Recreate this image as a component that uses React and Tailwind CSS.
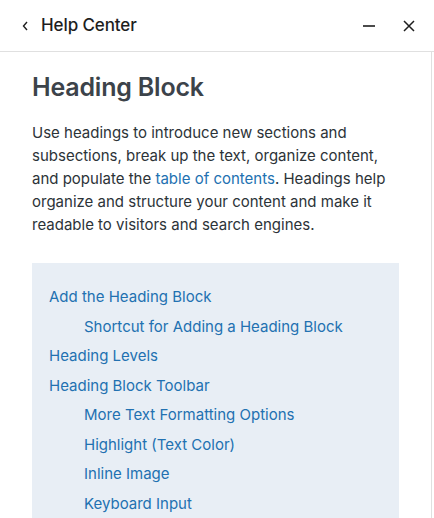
import React from 'react';

const tocItems = [
  { label: 'Add the Heading Block', indent: false },
  { label: 'Shortcut for Adding a Heading Block', indent: true },
  { label: 'Heading Levels', indent: false },
  { label: 'Heading Block Toolbar', indent: false },
  { label: 'More Text Formatting Options', indent: true },
  { label: 'Highlight (Text Color)', indent: true },
  { label: 'Inline Image', indent: true },
  { label: 'Keyboard Input', indent: true },
];

const App = () => {
  return (
    <div className="w-[434px] h-[518px] overflow-hidden bg-white font-['Inter',sans-serif] flex flex-col">
      {/* Header */}
      <div className="h-[52px] shrink-0 flex items-center border-b border-[#e0e0e0] pl-[19px] pr-[18px]">
        <button className="w-[12px] h-[16px] flex items-center justify-center text-[#1e1e1e]">
          <svg width="8" height="12" viewBox="0 0 8 12" fill="none">
            <path d="M6 2 L2.5 6 L6 10" stroke="currentColor" strokeWidth="1.4" />
          </svg>
        </button>
        <h1 className="ml-[10px] text-[17px] font-medium text-[#1e1e1e] tracking-[-0.1px]">Help Center</h1>
        <div className="ml-auto flex items-center gap-[26px]">
          <svg width="14" height="14" viewBox="0 0 14 14" fill="none" className="text-[#1e1e1e]">
            <path d="M1 7 H13" stroke="currentColor" strokeWidth="1.6" />
          </svg>
          <svg width="14" height="14" viewBox="0 0 14 14" fill="none" className="text-[#1e1e1e]">
            <path d="M2 2 L12 12 M12 2 L2 12" stroke="currentColor" strokeWidth="1.5" />
          </svg>
        </div>
      </div>

      {/* Body */}
      <div className="flex-1 w-[432px] border-r border-[#e0e0e0] pl-[32px] pr-[32px] overflow-hidden">
        <h2 className="mt-[17px] text-[25px] leading-[36px] font-semibold text-[#3c434a] tracking-[-0.2px]">
          Heading Block
        </h2>
        <p className="mt-[16px] text-[15px] leading-[23px] text-[#2c3338]">
          Use headings to introduce new sections and subsections, break up the text, organize content,
          and populate the <a className="text-[#2271b1]">table of contents</a>. Headings help organize
          and structure your content and make it readable to visitors and search engines.
        </p>

        <nav className="mt-[27px] w-[367px] bg-[#e8eef5] pl-[17px] pt-[23px] pb-[20px]">
          <ul className="flex flex-col gap-[7.5px]">
            {tocItems.map((item) => (
              <li
                key={item.label}
                className={`text-[15px] leading-[22px] text-[#2271b1] ${item.indent ? 'pl-[35px]' : ''}`}
              >
                {item.label}
              </li>
            ))}
          </ul>
        </nav>
      </div>
    </div>
  );
};

export default App;
